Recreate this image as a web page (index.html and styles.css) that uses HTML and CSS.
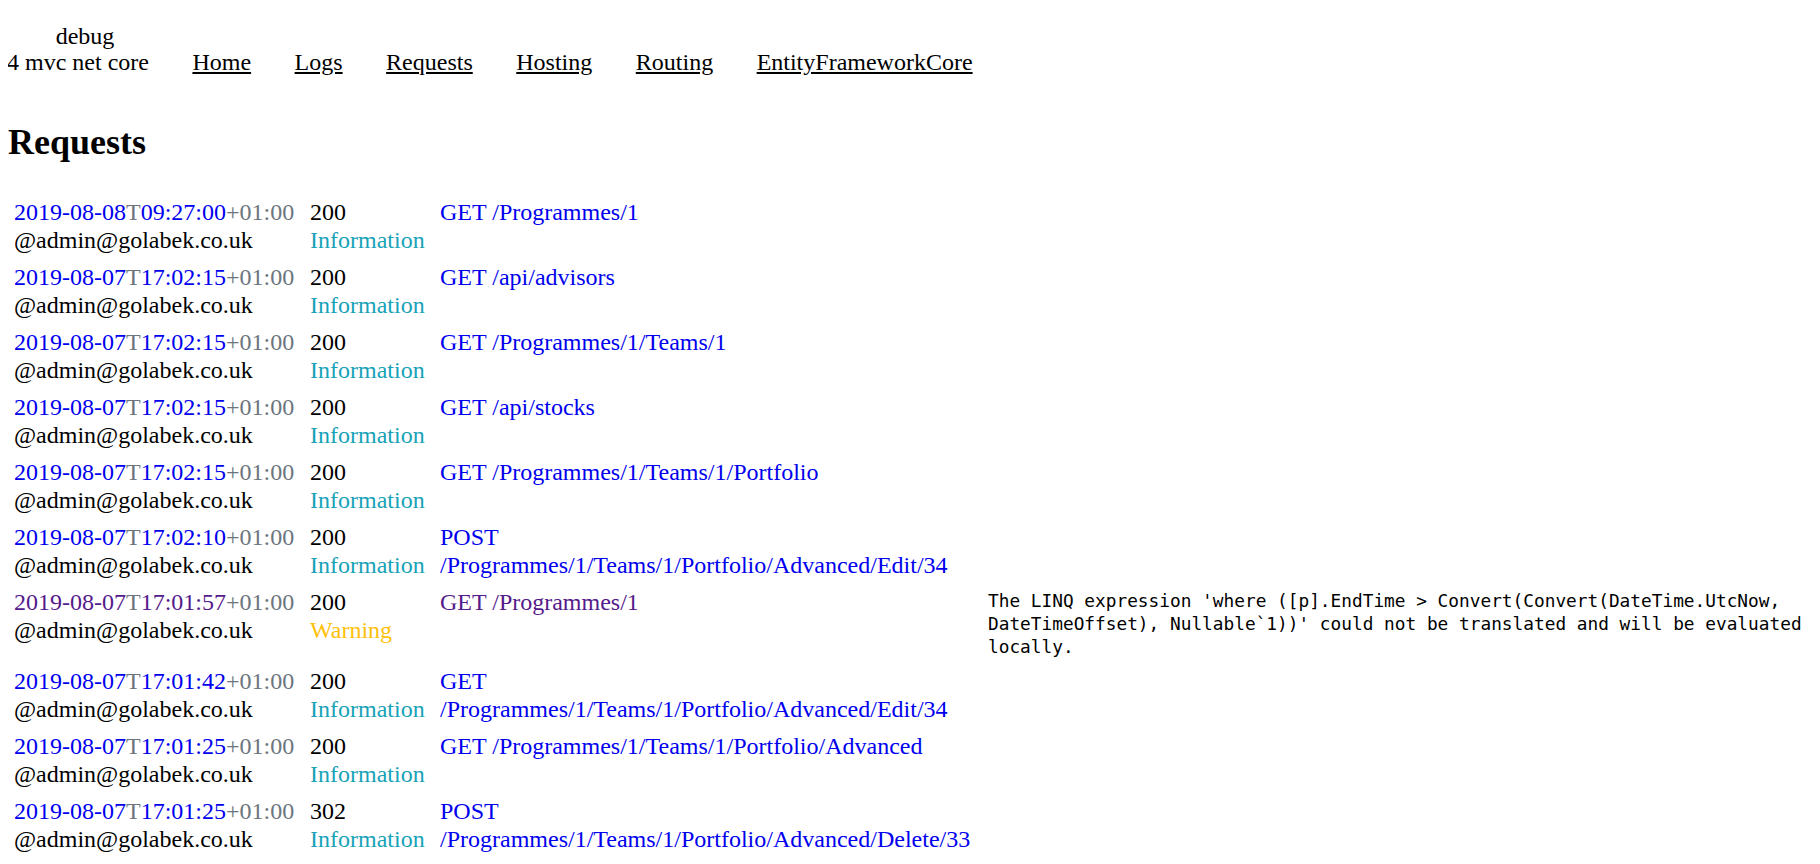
FILE: index.html
```html
<!DOCTYPE html>
<html lang="en">
<head>
<meta charset="utf-8">
<title>Requests - debug 4 mvc net core</title>
<link rel="stylesheet" href="styles.css">
</head>
<body>
<header class="site-header">
  <div class="brand">
    <div class="brand-top">debug</div>
    <div class="brand-bottom">4 mvc net core</div>
  </div>
  <nav class="main-nav">
    <a href="#">Home</a>
    <a href="#">Logs</a>
    <a href="#">Requests</a>
    <a href="#">Hosting</a>
    <a href="#">Routing</a>
    <a href="#">EntityFrameworkCore</a>
  </nav>
</header>

<h2 class="page-title">Requests</h2>

<table class="requests">
  <colgroup>
    <col class="c-time">
    <col class="c-status">
    <col class="c-path">
    <col class="c-msg">
  </colgroup>
  <tbody>
    <tr>
      <td><a href="#">2019-08-08</a><span class="muted">T</span><a href="#">09:27:00</a><span class="muted">+01:00</span><br>@admin@golabek.co.uk</td>
      <td>200<br><span class="lvl-info">Information</span></td>
      <td><a href="#">GET /Programmes/1</a></td>
      <td></td>
    </tr>
    <tr>
      <td><a href="#">2019-08-07</a><span class="muted">T</span><a href="#">17:02:15</a><span class="muted">+01:00</span><br>@admin@golabek.co.uk</td>
      <td>200<br><span class="lvl-info">Information</span></td>
      <td><a href="#">GET /api/advisors</a></td>
      <td></td>
    </tr>
    <tr>
      <td><a href="#">2019-08-07</a><span class="muted">T</span><a href="#">17:02:15</a><span class="muted">+01:00</span><br>@admin@golabek.co.uk</td>
      <td>200<br><span class="lvl-info">Information</span></td>
      <td><a href="#">GET /Programmes/1/Teams/1</a></td>
      <td></td>
    </tr>
    <tr>
      <td><a href="#">2019-08-07</a><span class="muted">T</span><a href="#">17:02:15</a><span class="muted">+01:00</span><br>@admin@golabek.co.uk</td>
      <td>200<br><span class="lvl-info">Information</span></td>
      <td><a href="#">GET /api/stocks</a></td>
      <td></td>
    </tr>
    <tr>
      <td><a href="#">2019-08-07</a><span class="muted">T</span><a href="#">17:02:15</a><span class="muted">+01:00</span><br>@admin@golabek.co.uk</td>
      <td>200<br><span class="lvl-info">Information</span></td>
      <td><a href="#">GET /Programmes/1/Teams/1/Portfolio</a></td>
      <td></td>
    </tr>
    <tr>
      <td><a href="#">2019-08-07</a><span class="muted">T</span><a href="#">17:02:10</a><span class="muted">+01:00</span><br>@admin@golabek.co.uk</td>
      <td>200<br><span class="lvl-info">Information</span></td>
      <td><a href="#">POST /Programmes/1/Teams/1/Portfolio/Advanced/Edit/34</a></td>
      <td></td>
    </tr>
    <tr>
      <td><a href="#" class="visited">2019-08-07</a><span class="muted">T</span><a href="#" class="visited">17:01:57</a><span class="muted">+01:00</span><br>@admin@golabek.co.uk</td>
      <td>200<br><span class="lvl-warn">Warning</span></td>
      <td><a href="#" class="visited">GET /Programmes/1</a></td>
      <td class="msg-cell"><div class="message">The LINQ expression 'where ([p].EndTime &gt; Convert(Convert(DateTime.UtcNow, DateTimeOffset), Nullable`1))' could not be translated and will be evaluated locally.</div></td>
    </tr>
    <tr>
      <td><a href="#">2019-08-07</a><span class="muted">T</span><a href="#">17:01:42</a><span class="muted">+01:00</span><br>@admin@golabek.co.uk</td>
      <td>200<br><span class="lvl-info">Information</span></td>
      <td><a href="#">GET /Programmes/1/Teams/1/Portfolio/Advanced/Edit/34</a></td>
      <td></td>
    </tr>
    <tr>
      <td><a href="#">2019-08-07</a><span class="muted">T</span><a href="#">17:01:25</a><span class="muted">+01:00</span><br>@admin@golabek.co.uk</td>
      <td>200<br><span class="lvl-info">Information</span></td>
      <td><a href="#">GET /Programmes/1/Teams/1/Portfolio/Advanced</a></td>
      <td></td>
    </tr>
    <tr>
      <td><a href="#">2019-08-07</a><span class="muted">T</span><a href="#">17:01:25</a><span class="muted">+01:00</span><br>@admin@golabek.co.uk</td>
      <td>302<br><span class="lvl-info">Information</span></td>
      <td><a href="#">POST /Programmes/1/Teams/1/Portfolio/Advanced/Delete/33</a></td>
      <td></td>
    </tr>
  </tbody>
</table>
</body>
</html>
```

FILE: styles.css
```css
html, body {
  background: #ffffff;
}

body {
  margin: 8px;
  font-family: "Liberation Serif", "Times New Roman", serif;
  font-size: 24px;
  color: #000000;
}

/* Header */
.site-header {
  display: flex;
  align-items: flex-end;
  gap: 43.5px;
  padding-top: 15px;
  margin-left: -1px;
  line-height: 26px;
}

.brand {
  text-align: center;
  white-space: nowrap;
}

.brand-top {
  padding-left: 14px;
}

.main-nav {
  display: flex;
  gap: 43.5px;
}

.main-nav a {
  color: #000000;
  text-decoration: underline;
  white-space: nowrap;
}

/* Title */
.page-title {
  font-size: 36px;
  font-weight: bold;
  line-height: 41px;
  margin: 47px 0 30px;
}

/* Table */
.requests {
  border-collapse: separate;
  border-spacing: 0;
  table-layout: fixed;
  width: calc(100% - 6px);
  margin-left: 6px;
  line-height: 28px;
}

.c-time { width: 296px; }
.c-status { width: 130px; }
.c-path { width: 548px; }

.requests td {
  vertical-align: baseline;
  padding: 4.5px 15px 4.5px 0;
  white-space: normal;
}

.requests td:last-child {
  padding-right: 0;
}

.requests td.msg-cell {
  vertical-align: top;
  padding-top: 6px;
}

.requests a {
  color: #0000ee;
  text-decoration: none;
}

.requests a.visited {
  color: #551a8b;
}

.muted {
  color: #6c757d;
}

.lvl-info {
  color: #17a2b8;
}

.lvl-warn {
  color: #ffc107;
}

.message {
  font-family: "DejaVu Sans Mono", "Liberation Mono", monospace;
  font-size: 17.8px;
  line-height: 23px;
  white-space: pre-wrap;
  word-break: normal;
}
```
